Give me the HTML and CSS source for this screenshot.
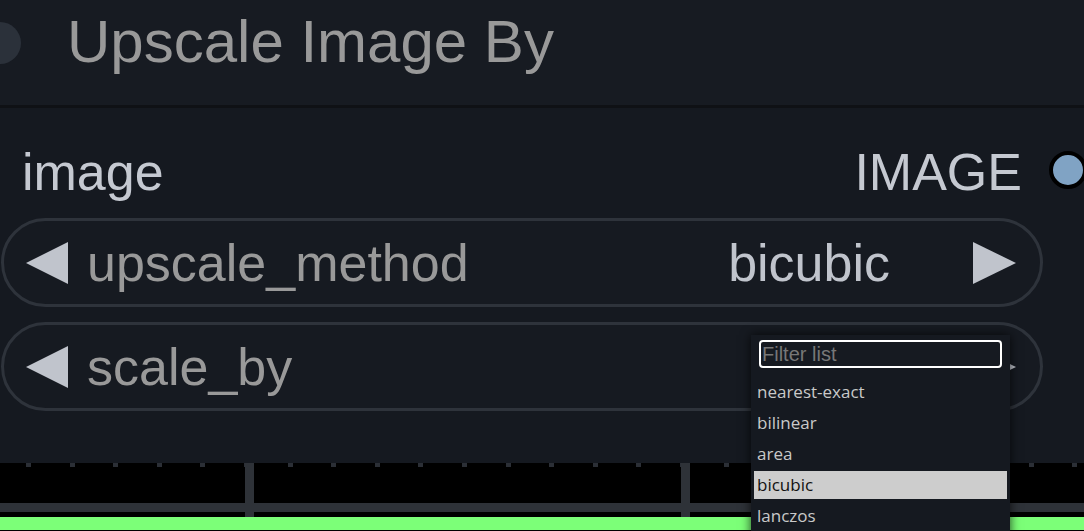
FILE: index.html
```html
<!DOCTYPE html>
<html>
  <head>
    <title>Upscale Image By</title>
    <link rel="stylesheet" href="styles.css">
  </head>
  <body>
    <div class="node">
      <div class="node-header">
        <span class="collapse-dot"></span>
        <h1 class="node-title">Upscale Image By</h1>
      </div>

      <div class="node-body">
        <div class="io-row">
          <span class="io-name">image</span>
          <span class="io-out">
            <span>IMAGE</span>
            <span class="slot"></span>
          </span>
        </div>

        <div class="widget">
          <span class="arrow arrow-left"></span>
          <span class="widget-label">upscale_method</span>
          <span class="widget-value">bicubic</span>
          <span class="arrow arrow-right"></span>
        </div>

        <!-- value of scale_by sits under the open menu -->
        <div class="widget">
          <span class="arrow arrow-left"></span>
          <span class="widget-label">scale_by</span>
          <span class="arrow arrow-right"></span>
        </div>
      </div>

      <div class="graph"></div>
    </div>

    <div class="menu">
      <input type="text" class="menu-filter" placeholder="Filter list">
      <ul class="menu-list">
        <li>nearest-exact</li>
        <li>bilinear</li>
        <li>area</li>
        <li class="selected">bicubic</li>
        <li>lanczos</li>
      </ul>
    </div>
  </body>
</html>
```

FILE: styles.css
```css
body{
  margin: 0;
  width: 1084px;
  height: 531px;
  overflow: hidden;
  background-color: #151920;
  font-family: "Liberation Sans", Arial, sans-serif;
}

.node{
  display: flex;
  flex-direction: column;
  height: 531px;
}

.node-header{
  display: flex;
  align-items: flex-start;
  box-sizing: border-box;
  height: 108px;
  padding-top: 12px;
  background-color: #171b22;
  border-bottom: 3px solid #0f1115;
}

.collapse-dot{
  width: 42px;
  height: 42px;
  margin-left: -21px;
  margin-top: 10px;
  border-radius: 50%;
  background-color: #2b313a;
}

.node-title{
  margin: 0 0 0 46px;
  font-size: 60px;
  font-weight: normal;
  line-height: 60px;
  color: #999999;
}

.node-body{
  display: flex;
  flex-direction: column;
  gap: 15px;
  box-sizing: border-box;
  height: 355px;
  padding-top: 34px;
}

.io-row{
  display: flex;
  justify-content: space-between;
  align-items: center;
  height: 60px;
  margin-bottom: 1px;
  padding-left: 22px;
  font-size: 52px;
  line-height: 60px;
  color: #c5c9d1;
}

.io-out{
  display: flex;
  align-items: center;
  gap: 27px;
  margin-right: -3px;
}

.slot{
  box-sizing: border-box;
  width: 38px;
  height: 38px;
  margin-top: -4px;
  border-radius: 50%;
  border: 4px solid #000;
  background-color: #80a3c4;
}

.widget{
  display: flex;
  align-items: center;
  box-sizing: border-box;
  width: 1042px;
  height: 89px;
  margin-left: 1px;
  padding: 0 24px 0 22px;
  border: 3px solid #2e333b;
  border-radius: 45px;
  background-color: #161a21;
  font-size: 52px;
}

.arrow{
  width: 0;
  height: 0;
  border-top: 21px solid transparent;
  border-bottom: 21px solid transparent;
}

.arrow-left{
  border-right: 42px solid #c0c4cc;
}

.arrow-right{
  border-left: 43px solid #c0c4cc;
}

.widget-label{
  flex: 1;
  margin-left: 19px;
  color: #999999;
}

.widget-value{
  margin-right: 83px;
  color: #c0c4cc;
}

.graph{
  flex: 1;
  background-color: #000;
  background-image:
    linear-gradient(#7cff78, #7cff78),
    linear-gradient(#2e3238, #2e3238),
    repeating-linear-gradient(to right, transparent 0 245px, #2e3238 245px 254px, transparent 254px 436px),
    repeating-linear-gradient(to right, transparent 0 26px, #2b2f36 26px 31px, transparent 31px 43.6px);
  background-repeat: no-repeat;
  background-size: 100% 13px, 100% 9px, 100% 54px, 100% 4px;
  background-position: 0 54px, 0 40px, 0 0, 0 0;
}

.menu{
  position: absolute;
  left: 751px;
  top: 335px;
  width: 259px;
  height: 210px;
  box-sizing: border-box;
  padding: 5px 3px 0 3px;
  background-color: #151920;
  box-shadow: 0 0 10px rgba(0, 0, 0, 0.75);
  font-family: "Open Sans", "Noto Sans", sans-serif;
}

.menu-filter{
  display: block;
  box-sizing: border-box;
  width: 243px;
  height: 28px;
  margin: 0 0 10px 5px;
  padding: 0 1px;
  border: 2px solid #ffffff;
  border-radius: 4px;
  background-color: #161a21;
  font-family: "Liberation Sans", Arial, sans-serif;
  font-size: 20px;
  color: #dddddd;
  outline: none;
}

.menu-filter::placeholder{
  color: #777777;
}

.menu-list{
  margin: 0;
  padding: 0;
  list-style: none;
}

.menu-list li{
  height: 28px;
  margin-bottom: 3px;
  padding-left: 3px;
  font-size: 17px;
  line-height: 28px;
  color: #c9c9c9;
}

.menu-list li.selected{
  background-color: #cdcdcd;
  color: #111111;
}
```
